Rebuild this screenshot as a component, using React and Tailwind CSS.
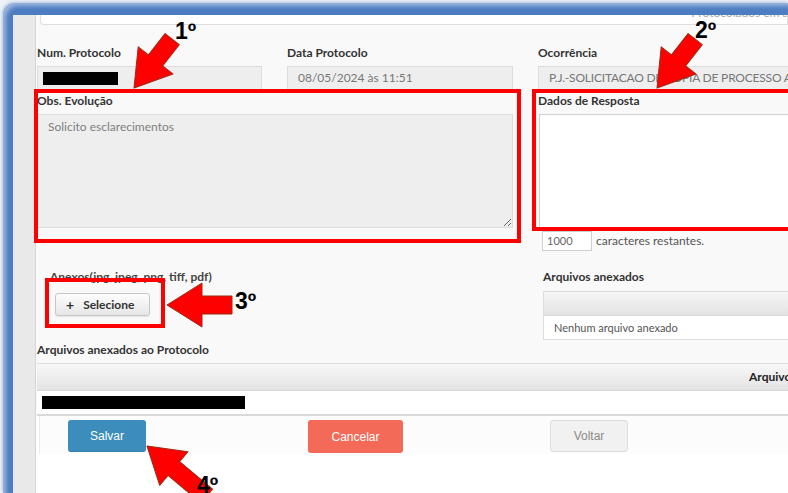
import React from 'react';

const Label = ({ children, className = '' }) => (
    <div className={`text-[12px] leading-[14px] font-bold text-[#333] whitespace-nowrap ${className}`}>{children}</div>
);

const Field = ({ children, className = '' }) => (
    <div className={`h-[24px] bg-[#eeeeee] border border-[#dcdcdc] pl-[10px] text-[12px] leading-[22px] text-[#777] whitespace-nowrap overflow-hidden ${className}`}>
        {children}
    </div>
);

// seta de destaque: ponta na origem, corpo para trás
const Arrow = ({ x, y, angle, len = 62 }) => (
    <polygon
        transform={`translate(${x} ${y}) rotate(${angle})`}
        points={`0,0 -35,-22 -35,-9 -${len},-9 -${len},9 -35,9 -35,22`}
        fill="#ff0000"
        stroke="#9c2a14"
        strokeWidth="1"
        strokeLinejoin="round"
    />
);

const Step = ({ children, className }) => (
    <span className={`absolute font-['Liberation_Sans',Arial,sans-serif] font-bold text-[23px] leading-none text-black ${className}`}>{children}</span>
);

export default function App() {
    return (
        <div className="relative w-[788px] h-[493px] overflow-hidden bg-[#eef2f8] font-['Lato',sans-serif]">
            <div className="ml-[3px] mt-[3px] h-[490px] rounded-tl-[12px] bg-[#4c7dc2] pl-[10px] pt-[12px] shadow-[inset_3px_3px_4px_rgba(255,255,255,0.45),-1px_-1px_3px_rgba(70,110,170,0.35)]">
                <div className="flex h-full">
                    <div className="w-[23px] shrink-0 bg-[#e9e9e9] border-r border-[#d5d5d5]" />

                    <div className="flex-1 min-w-0 overflow-hidden bg-[#f9f9f9] flex flex-col">
                        {/* rodapé do painel de cima */}
                        <div className="ml-[4px] h-[10px] bg-white border border-t-0 border-[#dedede] rounded-bl-[4px] overflow-hidden flex justify-end">
                            <span className="-mt-[11px] mr-[-30px] text-[12px] text-[#a8a8a8] whitespace-nowrap">Protocolados em aberto</span>
                        </div>

                        <div className="pl-[1px]">
                            <div className="grid grid-cols-[250px_251px_300px] mt-[21px]">
                                <div>
                                    <Label>Num. Protocolo</Label>
                                    <div className="mt-[6px] h-[24px] w-[225px] bg-[#eeeeee] border border-[#dcdcdc] flex items-center pl-[5px]">
                                        <div className="w-[75px] h-[13px] bg-black" />
                                    </div>
                                </div>
                                <div>
                                    <Label>Data Protocolo</Label>
                                    <Field className="mt-[6px] w-[226px]">08/05/2024 às 11:51</Field>
                                </div>
                                <div>
                                    <Label>Ocorrência</Label>
                                    <Field className="mt-[6px] w-[300px] tracking-[-0.2px]">P.J.-SOLICITACAO DE COPIA DE PROCESSO ADMINISTRATIVO</Field>
                                </div>

                                <div className="col-span-2 pr-[25px] mt-[4px]">
                                    <Label>Obs. Evolução</Label>
                                    <textarea
                                        readOnly
                                        defaultValue="Solicito esclarecimentos"
                                        className="mt-[6px] block w-full h-[114px] bg-[#eeeeee] border border-[#dcdcdc] pl-[10px] pt-[4px] text-[12px] leading-[16px] text-[#808080] outline-none"
                                    />
                                </div>
                                <div className="mt-[4px]">
                                    <Label>Dados de Resposta</Label>
                                    <textarea readOnly className="mt-[6px] ml-[1px] block w-[300px] h-[114px] bg-white border border-[#d0d0d0] outline-none resize-none" />
                                    <div className="mt-[3px] ml-[4px] flex items-center gap-[4px]">
                                        <div className="w-[50px] h-[20px] bg-white border border-[#cfcfcf] pl-[4px] text-[11px] leading-[18px] text-[#666]">1000</div>
                                        <span className="text-[12px] text-[#555]">caracteres restantes.</span>
                                    </div>
                                </div>
                            </div>

                            <div className="grid grid-cols-[501px_300px] mt-[19px]">
                                <div className="pl-[13px]">
                                    <div className="text-[12px] leading-[14px] font-bold text-[#444] whitespace-nowrap">Anexos(jpg, jpeg, png, tiff, pdf)</div>
                                    <button className="mt-[9px] ml-[5px] w-[95px] h-[23px] rounded-[3px] border border-[#c6c6c6] bg-gradient-to-b from-[#fdfdfd] to-[#e6e6e6] shadow-[0_1px_1px_rgba(0,0,0,0.08)] flex items-center pl-[10px] gap-[9px] text-[12px] font-bold text-[#333]">
                                        <span className="text-[14px] leading-none">+</span>
                                        <span>Selecione</span>
                                    </button>
                                </div>
                                <div className="pl-[5px]">
                                    <Label>Arquivos anexados</Label>
                                    <div className="mt-[7px] border border-[#dddddd] bg-white">
                                        <div className="h-[24px] bg-gradient-to-b from-[#f6f6f6] to-[#e3e3e3] border-b border-[#d8d8d8]" />
                                        <div className="h-[23px] pl-[10px] text-[11px] leading-[23px] text-[#555]">Nenhum arquivo anexado</div>
                                    </div>
                                </div>
                            </div>

                            <Label className="mt-[3px]">Arquivos anexados ao Protocolo</Label>
                        </div>

                        <div className="mt-[6px] ml-[1px] w-[800px] border-t border-[#dddddd]">
                            <div className="h-[27px] bg-gradient-to-b from-[#f7f7f7] to-[#e4e4e4] border-b border-[#d6d6d6] pl-[712px] text-[12px] font-bold leading-[26px] text-[#222]">Arquivo</div>
                            <div className="h-[23px] bg-white flex items-center pl-[5px]">
                                <div className="w-[203px] h-[13px] bg-black" />
                            </div>
                            <div className="h-[2px] bg-[#d9d9d9]" />
                        </div>

                        <div className="flex-1 bg-white">
                            <div className="h-[38px] ml-[3px] border-l border-[#ececec] bg-[#fcfcfc] grid grid-cols-[240px_242px_auto] pl-[28px] pt-[4px] font-['Liberation_Sans',Arial,sans-serif] text-[12px]">
                                <div>
                                    <button className="w-[78px] h-[32px] rounded-[3px] bg-[#3c8dbc] border-b border-[#357fab] text-white">Salvar</button>
                                </div>
                                <div>
                                    <button className="w-[95px] h-[33px] rounded-[3px] bg-[#f46a58] text-white">Cancelar</button>
                                </div>
                                <div>
                                    <button className="w-[78px] h-[32px] rounded-[3px] bg-[#f1f1f1] border border-[#dddddd] text-[#8a8a8a]">Voltar</button>
                                </div>
                            </div>
                        </div>
                    </div>
                </div>
            </div>

            {/* marcações dos passos */}
            <div className="absolute inset-0 pointer-events-none">
                <div className="absolute left-[34px] top-[89px] w-[487px] h-[154px] border-4 border-[#ff0000]" />
                <div className="absolute left-[532px] top-[89px] w-[270px] h-[142px] border-4 border-[#ff0000]" />
                <div className="absolute left-[45px] top-[278px] w-[120px] h-[50px] border-4 border-[#ff0000]" />

                <svg className="absolute inset-0" width="788" height="493" viewBox="0 0 788 493">
                    <Arrow x={134} y={88} angle={128} len={62} />
                    <Arrow x={657} y={88} angle={128} len={62} />
                    <Arrow x={167} y={305} angle={180} len={65} />
                    <Arrow x={147} y={446} angle={220} len={78} />
                </svg>

                <Step className="left-[175px] top-[20px]">1º</Step>
                <Step className="left-[695px] top-[19px]">2º</Step>
                <Step className="left-[235px] top-[290px]">3º</Step>
                <Step className="left-[197px] top-[474px]">4º</Step>
            </div>
        </div>
    );
}
